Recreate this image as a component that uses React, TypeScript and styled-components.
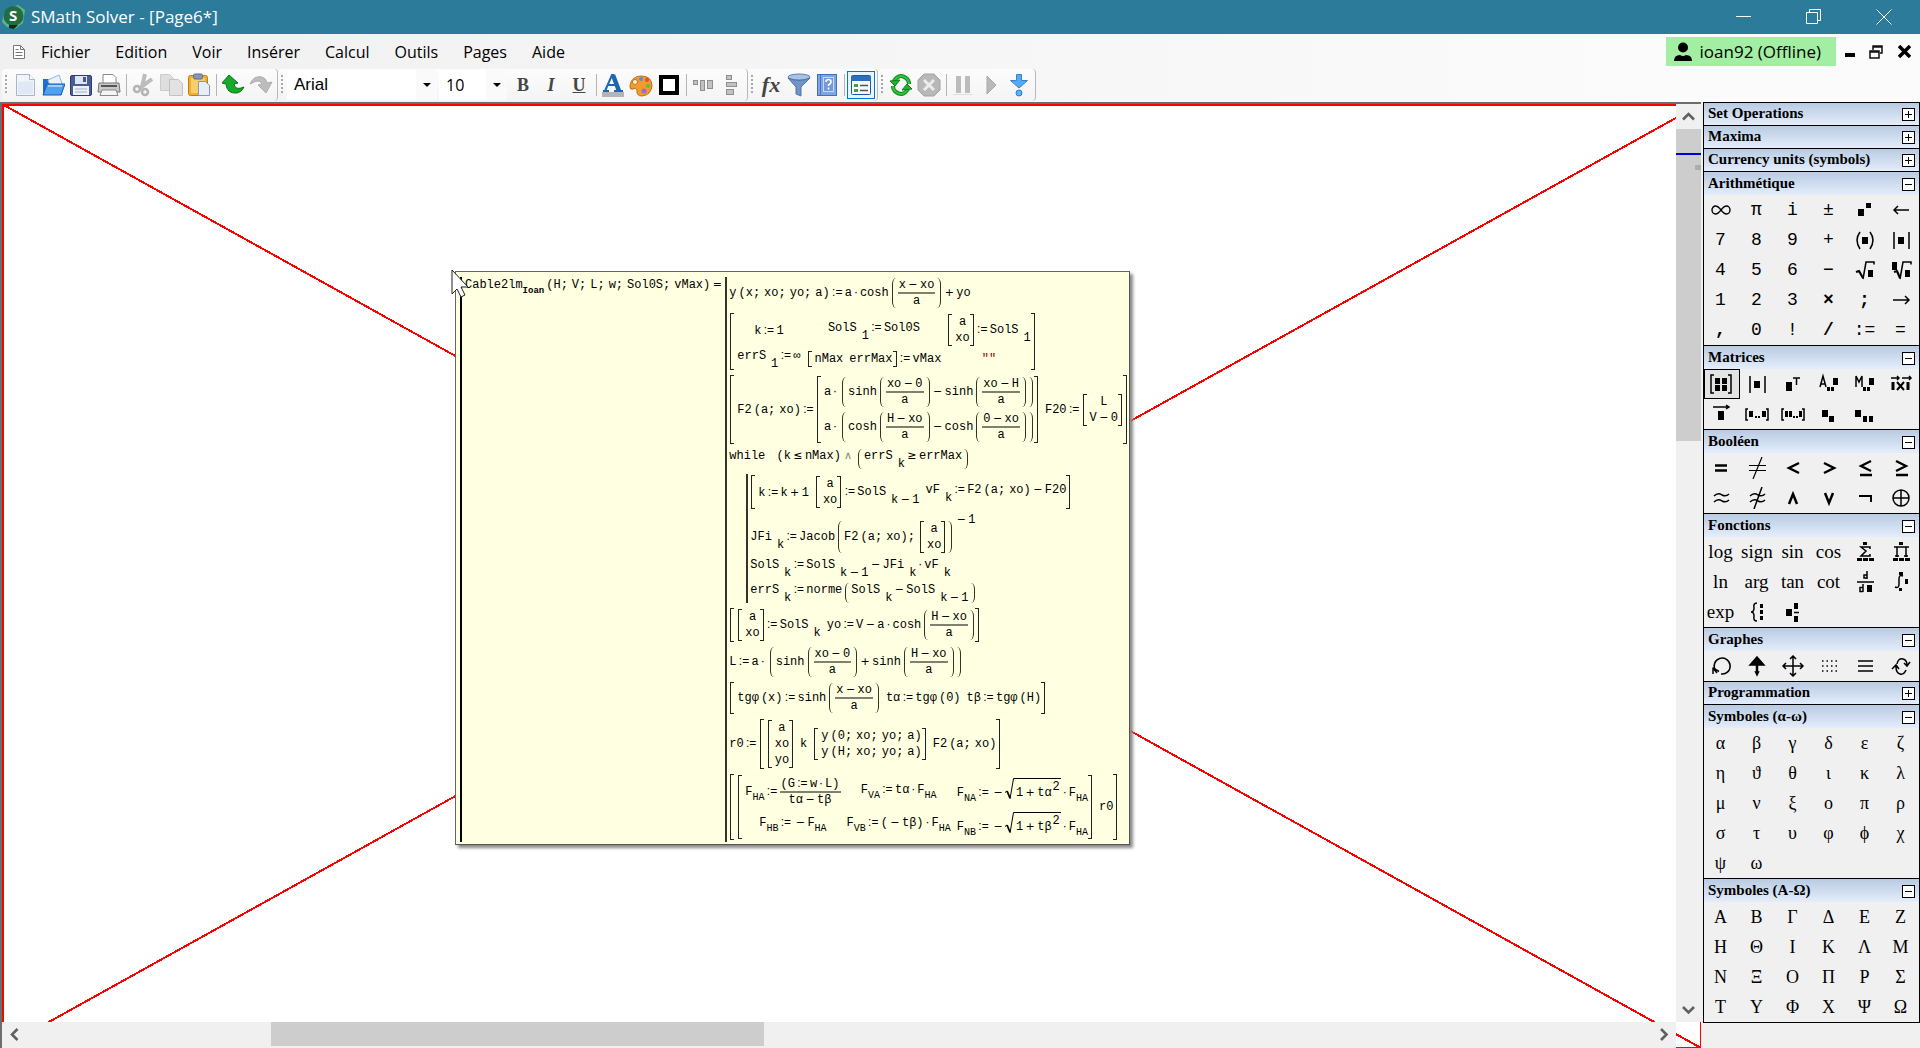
import React from "react";
import styled, { createGlobalStyle } from "styled-components";

const mono = `"Liberation Mono", "DejaVu Sans Mono", monospace`;
const ui = `"Open Sans", "Noto Sans", sans-serif`;
const serif = `"Liberation Serif", serif`;

const Global = createGlobalStyle`
  *, *::before, *::after { box-sizing: border-box; }
  html, body, #root { height: 100%; margin: 0; }
  body { background: #f0f0f0; font-family: ${ui}; color: #000; overflow: hidden; }
  button, input, select { font: inherit; color: inherit; margin: 0; padding: 0; border: 0; background: none; border-radius: 0; }
  svg { display: block; }
`;

/* ---------- window frame ---------- */

const Shell = styled.div`
  display: flex;
  flex-direction: column;
  height: 100vh;
`;
const TitleBar = styled.header`
  display: flex;
  align-items: center;
  height: 34px;
  flex: none;
  padding: 0 8px 0 2px;
  gap: 5px;
  background: #2c7b9a;
  color: #fff;
`;
const Title = styled.h1`
  flex: 1;
  margin: 0;
  font-size: 17px;
  line-height: 24px;
  font-weight: 400;
`;
const WindowButtons = styled.div`
  display: flex;
  gap: 14px;
`;
const WindowButton = styled.button`
  display: grid;
  place-items: center;
  width: 56px;
  height: 34px;
`;
const MenuBar = styled.nav`
  display: flex;
  align-items: center;
  height: 35px;
  flex: none;
  padding: 0 6px 0 11px;
  background: linear-gradient(90deg, #f0f0f0, #fbfbfb 90%);
`;
const Menus = styled.div`
  display: flex;
  flex: 1;
  gap: 25px;
  margin-left: 14px;
`;
const MenuItem = styled.button`
  font-size: 16px;
  line-height: 24px;
`;
const Account = styled.button`
  display: flex;
  align-items: center;
  gap: 8px;
  height: 29px;
  padding: 0 15px 0 8px;
  background: #a2eea2;
  font-size: 17px;
  white-space: nowrap;
`;
const ChildButtons = styled.div`
  display: flex;
  align-items: center;
  margin-left: 3px;
`;
const ChildButton = styled.button`
  display: grid;
  place-items: center;
  width: 29px;
  height: 24px;
  &:first-child { width: 22px; }
  &:last-child { width: 20px; margin-left: 4px; }
`;
const ToolRow = styled.div`
  display: flex;
  height: 33px;
  flex: none;
  padding-left: 2px;
  background: linear-gradient(90deg, #f0f0f0, #fbfbfb 90%);
`;
const ToolGroup = styled.div`
  display: flex;
  align-items: center;
  height: 32px;
  padding-right: 2px;
  border-right: 1px solid #b8b8b8;
  border-radius: 4px;
  background: linear-gradient(#fcfcfc, #f4f4f4);
`;
const Grip = styled.span`
  width: 2px;
  height: 20px;
  margin: 0 4px 0 3px;
  background: repeating-linear-gradient(#a8a8a8 0 2px, transparent 2px 4px);
`;
const Tool = styled.button<{ $active?: boolean }>`
  display: grid;
  place-items: center;
  width: 28px;
  height: 28px;
  border: 1px solid ${(p) => (p.$active ? "#0078d7" : "transparent")};
  background: ${(p) => (p.$active ? "#eaf4fc" : "transparent")};
`;
const ToolLetter = styled.span<{ $italic?: boolean; $under?: boolean; $big?: boolean }>`
  font: ${(p) => (p.$italic ? "italic" : "normal")} 700 ${(p) => (p.$big ? 22 : 18)}px/20px ${serif};
  color: #454545;
  text-decoration: ${(p) => (p.$under ? "underline" : "none")};
`;
const Divider = styled.span`
  width: 1px;
  height: 22px;
  margin: 0 2px 0 3px;
  background: #b4b4b4;
`;
const Combo = styled.div<{ $size: "font" | "points" }>`
  display: flex;
  align-items: center;
  width: ${(p) => (p.$size === "font" ? 150 : 68)}px;
  height: 30px;
  margin-right: 2px;
  padding-left: 7px;
  background: #fff;
`;
const ComboInput = styled.input<{ $arial?: boolean }>`
  flex: 1;
  min-width: 0;
  outline: none;
  font-family: ${(p) => (p.$arial ? `"Liberation Sans", sans-serif` : ui)};
  font-size: ${(p) => (p.$arial ? 17 : 16)}px;
  line-height: 24px;
`;
const ComboArrow = styled.button`
  display: grid;
  place-items: center;
  width: 21px;
  height: 30px;
  background: #fafafa;
`;

/* ---------- work area ---------- */

const Main = styled.main`
  display: grid;
  grid-template-columns: minmax(0, 1fr) 217px;
  column-gap: 2px;
  flex: 1;
  min-height: 0;
`;
const Workspace = styled.section`
  position: relative;
  display: grid;
  grid-template-columns: minmax(0, 1fr) 25px;
  grid-template-rows: minmax(0, 1fr) 26px;
  border: solid #6d6d6d;
  border-width: 2px 0 0 2px;
  background: #fff;
`;
const Cross = styled.svg`
  position: absolute;
  inset: 0;
  width: 100%;
  height: 100%;
`;
const VScroll = styled.div`
  position: relative;
  z-index: 1;
  grid-area: 1 / 2;
  display: flex;
  flex-direction: column;
  background: #f0f0f0;
`;
const HScroll = styled.div`
  position: relative;
  z-index: 1;
  grid-area: 2 / 1;
  display: flex;
  background: #f0f0f0;
`;
const ScrollButton = styled.button`
  display: grid;
  place-items: center;
  width: 25px;
  height: 25px;
`;
const VTrack = styled.div`
  flex: 1;
`;
const VThumb = styled.div`
  height: 36%;
  background: #cdcdcd;
`;
const HTrack = styled.div`
  flex: 1;
  height: 24px;
`;
const HThumb = styled.div`
  width: 30.4%;
  height: 24px;
  margin-left: 15%;
  background: #cdcdcd;
`;
const BlueMark = styled.span`
  position: absolute;
  top: 49px;
  left: 0;
  width: 25px;
  height: 2px;
  background: #0000d8;
`;
const GreyMark = styled.span`
  position: absolute;
  top: 61px;
  right: 0;
  width: 6px;
  height: 5px;
  background: #adadad;
`;
const Pointer = styled.svg`
  position: absolute;
  left: 449px;
  top: 165px;
`;

/* ---------- formula tooltip ---------- */

const Tip = styled.div`
  position: absolute;
  left: 453px;
  top: 167px;
  display: flex;
  padding: 5px 1px 2px 4px;
  border: 1px solid #63686c;
  border-color: #63686c #555 #555 #63686c;
  box-shadow: 3px 3px 3px #8a8a8a;
  background: #ffffe1;
  font: 12px/14px ${mono};
  white-space: nowrap;
`;
const Definition = styled.div`
  padding: 1px 1px 0 3px;
  border-left: 2px solid #000;
`;
const Block = styled.div<{ $inner?: boolean }>`
  display: flex;
  flex-direction: column;
  align-items: flex-start;
  gap: ${(p) => (p.$inner ? 4 : 5)}px;
  padding: ${(p) => (p.$inner ? "1px 0 0 2px" : "1px 0 2px 2px")};
  margin-left: ${(p) => (p.$inner ? 17 : 0)}px;
  border-left: 2px solid #333326;
`;
const Sep = styled.span`
  margin-right: 4px;
`;
const ArgOpen = styled.span`
  margin-left: 2px;
`;
const Operator = styled.span<{ $dim?: boolean }>`
  display: inline-block;
  width: 14px;
  text-align: center;
  font-family: "DejaVu Sans", sans-serif;
  font-size: 11px;
  color: ${(p) => (p.$dim ? "#888878" : "inherit")};
`;
const AssignOp = styled.span`
  display: inline-block;
  width: 15px;
  text-align: center;
  font-family: "Liberation Sans", sans-serif;
  font-size: 12px;
`;
const DotOp = styled.span`
  display: inline-block;
  width: 8px;
  text-align: center;
  font-family: "Liberation Sans", sans-serif;
`;
const FracBox = styled.span`
  display: inline-flex;
  flex-direction: column;
  align-items: center;
  vertical-align: middle;
`;
const FracTop = styled.span`
  padding: 0 1px;
  border-bottom: 2px solid #808072;
`;
const Group = styled.span`
  display: inline-flex;
  padding-left: 2px;
`;
const ParenSide = styled.span<{ $right?: boolean }>`
  width: 4px;
  margin: 0 1px;
  border-left: ${(p) => (p.$right ? 0 : 1)}px solid #333326;
  border-right: ${(p) => (p.$right ? 1 : 0)}px solid #333326;
  border-radius: ${(p) => (p.$right ? "0 4px 4px 0 / 0 6px 6px 0" : "4px 0 0 4px / 6px 0 0 6px")};
`;
const GroupBody = styled.span`
  align-self: baseline;
  padding: 0 1px;
`;
const MatrixBox = styled.span<{ $cols: number; $loose?: boolean }>`
  position: relative;
  display: inline-grid;
  grid-template-columns: repeat(${(p) => p.$cols}, auto);
  justify-items: center;
  align-items: center;
  gap: ${(p) => (p.$loose ? 5 : 2)}px 6px;
  padding: 1px 5px 1px 8px;
  vertical-align: middle;
  &::before, &::after {
    content: "";
    position: absolute;
    top: 0;
    bottom: 0;
    width: 4px;
    border: 1px solid #222;
  }
  &::before { left: 1px; border-right: 0; }
  &::after { right: 1px; border-left: 0; }
`;
const Cell = styled.span`
  display: block;
`;
const Index = styled.span`
  display: inline-block;
  margin-left: 5px;
  line-height: 10px;
  vertical-align: -8px;
`;
const Label = styled.span`
  font-size: 10px;
  line-height: 10px;
  vertical-align: -5px;
`;
const BoldLabel = styled.span`
  font-size: 9px;
  font-weight: 700;
  vertical-align: -5px;
`;
const Power = styled.span<{ $high?: boolean }>`
  margin-left: 1px;
  vertical-align: ${(p) => (p.$high ? 17 : 6)}px;
`;
const Text = styled.span`
  color: #900;
`;
const RootBox = styled.span`
  display: inline-flex;
`;
const RootBody = styled.span`
  align-self: baseline;
  padding: 1px 1px 2px 2px;
  border-top: 1px solid #000;
`;

const Set = () => <AssignOp>:=</AssignOp>;
const Minus = () => <Operator>−</Operator>;
const Plus = () => <Operator>+</Operator>;
const Dot = () => <DotOp>·</DotOp>;

const Call = ({ name, args }: { name: React.ReactNode; args: string[] }) => (
  <>
    {name}
    <ArgOpen>(</ArgOpen>
    {args.map((a, i) => (
      <React.Fragment key={i}>
        {a}
        {i < args.length - 1 && <Sep>;</Sep>}
      </React.Fragment>
    ))}
    )
  </>
);
const Paren = ({ children }: { children: React.ReactNode }) => (
  <Group>
    <ParenSide />
    <GroupBody>{children}</GroupBody>
    <ParenSide $right />
  </Group>
);
const Frac = ({ top, bottom }: { top: React.ReactNode; bottom: React.ReactNode }) => (
  <FracBox>
    <FracTop>{top}</FracTop>
    <span>{bottom}</span>
  </FracBox>
);
const Matrix = ({ cols = 1, loose, cells }: { cols?: number; loose?: boolean; cells: React.ReactNode[] }) => (
  <MatrixBox $cols={cols} $loose={loose}>
    {cells.map((c, i) => (
      <Cell key={i}>{c}</Cell>
    ))}
  </MatrixBox>
);
const Root = ({ children }: { children: React.ReactNode }) => (
  <RootBox>
    <svg width="9" height="22" viewBox="0 0 9 22" fill="none" stroke="#000">
      <path d="M0 14.5 2 13" />
      <path d="M2 13 5 20" strokeWidth="1.8" />
      <path d="M5 21 8.5 .5H9" />
    </svg>
    <RootBody>{children}</RootBody>
  </RootBox>
);
const F = ({ s }: { s: string }) => (
  <>
    F<Label>{s}</Label>
  </>
);
const diff = (a: string, b: string) => (
  <>
    {a}
    <Minus />
    {b}
  </>
);
const pair = <Matrix cells={["a", "xo"]} />;

const Formula = () => (
  <Tip>
    <Definition>
      <Call name={<>Cable2lm<BoldLabel>Ioan</BoldLabel></>} args={["H", "V", "L", "w", "Sol0S", "vMax"]} />
      <Operator>=</Operator>
    </Definition>
    <Block>
      <div>
        <Call name="y" args={["x", "xo", "yo", "a"]} />
        <Set />a<Dot />cosh
        <Paren>
          <Frac top={diff("x", "xo")} bottom="a" />
        </Paren>
        <Plus />yo
      </div>
      <Matrix
        cols={3}
        cells={[
          <>k<Set />1</>,
          <>SolS<Index>1</Index><Set />Sol0S</>,
          <>{pair}<Set />SolS<Index>1</Index></>,
          <>errS<Index>1</Index><Set />∞</>,
          <><Matrix cols={2} cells={["nMax", "errMax"]} /><Set />vMax</>,
          <Text>""</Text>,
        ]}
      />
      <Matrix
        cols={2}
        cells={[
          <>
            <Call name="F2" args={["a", "xo"]} />
            <Set />
            <Matrix
              loose
              cells={[
                <>a<Dot /><Paren>sinh<Paren><Frac top={diff("xo", "0")} bottom="a" /></Paren><Minus />sinh<Paren><Frac top={diff("xo", "H")} bottom="a" /></Paren></Paren></>,
                <>a<Dot /><Paren>cosh<Paren><Frac top={diff("H", "xo")} bottom="a" /></Paren><Minus />cosh<Paren><Frac top={diff("0", "xo")} bottom="a" /></Paren></Paren></>,
              ]}
            />
          </>,
          <>F20<Set /><Matrix cells={["L", diff("V", "0")]} /></>,
        ]}
      />
      <div>
        <Sep>while</Sep> (k<Operator>≤</Operator>nMax)<Operator $dim>∧</Operator>
        <Paren>errS<Index>k</Index><Operator>≥</Operator>errMax</Paren>
      </div>
      <Block $inner>
        <Matrix
          cols={3}
          cells={[
            <>k<Set />k<Plus />1</>,
            <>{pair}<Set />SolS<Index>{diff("k", "1")}</Index></>,
            <>vF<Index>k</Index><Set /><Call name="F2" args={["a", "xo"]} /><Minus />F20</>,
          ]}
        />
        <div>
          JFi<Index>k</Index><Set />Jacob
          <Paren><Call name="F2" args={["a", "xo"]} /><Sep>;</Sep>{pair}</Paren>
          <Power $high><Minus />1</Power>
        </div>
        <div>SolS<Index>k</Index><Set />SolS<Index>{diff("k", "1")}</Index><Minus />JFi<Index>k</Index><Dot />vF<Index>k</Index></div>
        <div>
          errS<Index>k</Index><Set />norme
          <Paren>SolS<Index>k</Index><Minus />SolS<Index>{diff("k", "1")}</Index></Paren>
        </div>
      </Block>
      <Matrix
        cols={2}
        cells={[
          <>{pair}<Set />SolS<Index>k</Index></>,
          <>yo<Set />V<Minus />a<Dot />cosh<Paren><Frac top={diff("H", "xo")} bottom="a" /></Paren></>,
        ]}
      />
      <div>
        L<Set />a<Dot />
        <Paren>
          sinh<Paren><Frac top={diff("xo", "0")} bottom="a" /></Paren><Plus />sinh<Paren><Frac top={diff("H", "xo")} bottom="a" /></Paren>
        </Paren>
      </div>
      <Matrix
        cols={3}
        cells={[
          <><Call name="tgφ" args={["x"]} /><Set />sinh<Paren><Frac top={diff("x", "xo")} bottom="a" /></Paren></>,
          <>tα<Set /><Call name="tgφ" args={["0"]} /></>,
          <>tβ<Set /><Call name="tgφ" args={["H"]} /></>,
        ]}
      />
      <div>
        r0<Set />
        <Matrix
          cols={4}
          cells={[
            <Matrix cells={["a", "xo", "yo"]} />,
            "k",
            <Matrix cells={[<Call name="y" args={["0", "xo", "yo", "a"]} />, <Call name="y" args={["H", "xo", "yo", "a"]} />]} />,
            <Call name="F2" args={["a", "xo"]} />,
          ]}
        />
      </div>
      <Matrix
        cols={2}
        cells={[
          <Matrix
            cols={3}
            loose
            cells={[
              <><F s="HA" /><Set /><Frac top={<>(G<Set />w<Dot />L)</>} bottom={diff("tα", "tβ")} /></>,
              <><F s="VA" /><Set />tα<Dot /><F s="HA" /></>,
              <><F s="NA" /><Set /><Minus /><Root>1<Plus />tα<Power>2</Power></Root><Dot /><F s="HA" /></>,
              <><F s="HB" /><Set /><Minus /><F s="HA" /></>,
              <><F s="VB" /><Set />(<Minus />tβ)<Dot /><F s="HA" /></>,
              <><F s="NB" /><Set /><Minus /><Root>1<Plus />tβ<Power>2</Power></Root><Dot /><F s="HA" /></>,
            ]}
          />,
          "r0",
        ]}
      />
    </Block>
  </Tip>
);

/* ---------- side palettes ---------- */

const Side = styled.aside`
  align-self: start;
  border: solid #000;
  border-width: 0 1px 1px 1px;
`;
const PaletteHead = styled.h2<{ $open: boolean }>`
  display: flex;
  align-items: center;
  justify-content: space-between;
  height: ${(p) => (p.$open ? 24 : 23)}px;
  margin: 0;
  padding: 0 4px 2px;
  border-top: 1px solid #000;
  background: linear-gradient(#b9cbe2, #e4edfb);
  font: 700 15px/20px ${serif};
`;
const Toggle = styled.button`
  display: grid;
  place-items: center;
  width: 13px;
  height: 13px;
  margin-top: 3px;
  border: 1px solid #000;
  background: #fff;
`;
const Keys = styled.div`
  display: grid;
  grid-template-columns: repeat(6, 36px);
  grid-auto-rows: 30px;
  margin-right: -1px;
`;
type Face = "mono" | "words" | "greek";
const faces: Record<Face, string> = {
  mono: `18px/24px ${mono}`,
  words: `19px/24px ${serif}`,
  greek: `18px/24px ${serif}`,
};
const Key = styled.button<{ $face?: Face; $bold?: boolean; $on?: boolean }>`
  display: grid;
  place-items: center;
  padding-right: 3px;
  white-space: nowrap;
  border: 1px solid ${(p) => (p.$on ? "#000" : "transparent")};
  background: ${(p) => (p.$on ? "#e3e3e3" : "transparent")};
  font: ${(p) => (p.$bold ? 700 : 400)} ${(p) => faces[p.$face ?? "mono"]};
`;

const S = ({ children, w = 24 }: { children: React.ReactNode; w?: number }) => (
  <svg width={w} height="22" viewBox={`0 0 ${w} 22`} fill="none" stroke="#000" strokeWidth="1.5">
    {children}
  </svg>
);
const Sq = ({ x, y, w = 5, h = 6 }: { x: number; y: number; w?: number; h?: number }) => (
  <rect x={x} y={y} width={w} height={h} fill="#000" stroke="none" />
);

const G: Record<string, React.ReactNode> = {
  inf: <S><path d="M12 11q-3-4-5.500-4a3.500 4 0 0 0 0 8Q9 15 12 11t5.500-4a3.500 4 0 0 1 0 8Q15 15 12 11z" strokeWidth="1.400" /></S>,
  pow: <S><Sq x={5} y={10} w={6} h={7} /><Sq x={13} y={4} w={5} h={5} /></S>,
  left: <S><path d="M5 11h15M9 7l-4 4 4 4" /></S>,
  right: <S><path d="M4 11h16M16 7l4 4-4 4" /></S>,
  paren: <S><path d="M7 3q-6 8 0 17M17 3q6 8 0 17" /><Sq x={9} y={8} w={6} h={7} /></S>,
  bars: <S><path d="M5 3v17M20 3v17" /><Sq x={9} y={8} w={6} h={7} /></S>,
  sqrt: <S><path d="m3 13 3-1 4 7" strokeWidth="2.200" /><path d="M10 20 13 3h8v2.500" /><Sq x={15} y={11} w={5} h={7} /></S>,
  nroot: <S><path d="m5 13 3-1 3 7" strokeWidth="2.200" /><path d="M11 20 14 3h8v2.500" /><Sq x={3} y={3} w={5} h={8} /><Sq x={16} y={11} w={5} h={7} /></S>,
  matrix: <S><path d="M5 2H2v18h3M19 2h3v18h-3" /><Sq x={6} y={5} /><Sq x={13} y={5} /><Sq x={6} y={12} /><Sq x={13} y={12} /></S>,
  transpose: <S><Sq x={5} y={9} w={6} h={9} /><path d="M12 5h7M15.500 5v7" /></S>,
  minorA: <S><path d="m3 14 3-11 3 11M4 11h4" /><Sq x={16} y={5} w={5} h={7} /><Sq x={10} y={14} w={3} h={4} /><Sq x={14} y={14} w={3} h={4} /></S>,
  minorM: <S><path d="M3 14V3l3 6 3-6v11" /><Sq x={16} y={5} w={5} h={7} /><Sq x={10} y={14} w={3} h={4} /><Sq x={14} y={14} w={3} h={4} /></S>,
  cross: <S><path d="M2 5h8M8 3l2 2-2 2M13 5h9M20 3l2 2-2 2" /><path d="M4 9v8M19 9v8" strokeWidth="3" /><path d="m8 9 7 8M15 9l-7 8" strokeWidth="2" /></S>,
  vec: <S><path d="M4 4h16M17 2l3 2-3 2" /><Sq x={9} y={8} w={6} h={9} /></S>,
  range1: <S><path d="M3 6H1v11h2M21 6h2v11h-2" /><Sq x={4} y={8} w={4} /><Sq x={17} y={8} w={4} /><Sq x={10} y={13} w={2} h={2} /><Sq x={13} y={13} w={2} h={2} /></S>,
  range2: <S><path d="M3 6H1v11h2M21 6h2v11h-2" /><Sq x={4} y={8} w={3} /><Sq x={8} y={8} w={3} /><Sq x={18} y={8} w={3} /><Sq x={12} y={13} w={2} h={2} /><Sq x={15} y={13} w={2} h={2} /></S>,
  sub1: <S><Sq x={5} y={7} w={6} h={7} /><Sq x={12} y={13} w={5} h={6} /></S>,
  sub2: <S><Sq x={2} y={7} w={6} h={7} /><Sq x={10} y={13} w={4} h={6} /><Sq x={16} y={13} w={4} h={6} /></S>,
  eq: <S><path d="M6 8.500h12M6 13.500h12" strokeWidth="2.500" /></S>,
  ne: <S><path d="M4 8.500h17M4 13.500h17M8 22 17 0" strokeWidth="1.200" /></S>,
  lt: <S><path d="M18 6 8 11l10 5" strokeWidth="2.500" /></S>,
  gt: <S><path d="m7 6 10 5-10 5" strokeWidth="2.500" /></S>,
  le: <S><path d="M18 4 8 9l10 5M7 18h12" strokeWidth="2.300" /></S>,
  ge: <S><path d="m7 4 10 5-10 5M7 18h12" strokeWidth="2.300" /></S>,
  approx: <S><path d="M5 9q4-4 8-1 4 2 7-1M5 15q4-4 8-1 4 2 7-1" /></S>,
  napprox: <S><path d="M5 9q4-4 8-1 4 2 7-1M5 15q4-4 8-1 4 2 7-1M9 22 17 0" /></S>,
  and: <S><path d="m8 17 4-10 4 10" strokeWidth="2.500" /></S>,
  or: <S><path d="m8 6 4 10 4-10" strokeWidth="2.500" /></S>,
  not: <S><path d="M6 9h12v6" strokeWidth="2" /></S>,
  xor: <S><circle cx="12" cy="11" r="8" /><path d="M12 3v16M4 11h16" /></S>,
  sum: <S><path d="M17 8V6H8l5 4-5 5h9v-2" /><Sq x={10} y={1} w={4} h={3} /><Sq x={4} y={17} w={5} h={3} /><Sq x={10} y={17} w={5} h={3} /><Sq x={16} y={17} w={5} h={3} /></S>,
  prod: <S><path d="M5 6h15M8 6v10M17 6v10M6 15h4M15 15h4" /><Sq x={10} y={1} w={4} h={3} /><Sq x={4} y={17} w={5} h={3} /><Sq x={10} y={17} w={5} h={3} /><Sq x={16} y={17} w={5} h={3} /></S>,
  deriv: <S><path d="M4 11h17M14 0v8M14 4h-3v3h3M10 13v8M10 16.500H7v4h3" /><Sq x={14} y={14} w={5} h={7} /></S>,
  integral: <S><path d="M14 5q-4-2-4 3v5q0 5-4 3" /><Sq x={10} y={1} w={4} h={3} /><Sq x={16} y={8} w={3} h={5} /><Sq x={10} y={17} w={3} h={3} /></S>,
  cases: <S><path d="M12 2q-4 0-3 5 0 4-3 4 3 0 3 4-1 5 3 5" /><Sq x={15} y={3} w={3} h={4} /><Sq x={15} y={9} w={3} h={4} /><Sq x={15} y={15} w={3} h={4} /></S>,
  branch: <S><Sq x={5} y={8} w={6} h={7} /><Sq x={13} y={2} w={4} h={6} /><Sq x={13} y={15} w={4} h={6} /><path d="M13 11.500h5" /></S>,
  rotate: <S><path d="M6.500 15.500A8 8 0 1 1 12 19" /><path d="M4 12.500v6.500M4 13l6 3.500M4 13l4 5" /></S>,
  scale: <S><path d="m12 2 7 8H5z" fill="#000" /><path d="M12 8v9" strokeWidth="2.500" /><path d="m10.500 17 1.500 3 1.500-3z" fill="#000" /></S>,
  move: <S><path d="M12 1v20M2 11h20M9 4l3-3 3 3M9 18l3 3 3-3M5 8l-3 3 3 3M19 8l3 3-3 3" /></S>,
  dots: <S><path d="M5 6h16M5 11h16M5 16h16" strokeDasharray="1.500 3" /></S>,
  lines: <S><path d="M5 6h15M5 11h15M5 16h15" /></S>,
  refresh: <S><path d="M8 9q1-6 6-5 4 1 4 6M15 8l3 3 3-4M17 15q-2 5-6 4-4-1-4-7M3 14l4-4 3 4" /></S>,
};

type Palette = { title: string; keys?: (string | { g: string })[]; face?: Face };
const g = (name: string) => ({ g: name });
const palettes: Palette[] = [
  { title: "Set Operations" },
  { title: "Maxima" },
  { title: "Currency units (symbols)" },
  {
    title: "Arithmétique",
    keys: [g("inf"), "π", "i", "±", g("pow"), g("left"), "7", "8", "9", "+", g("paren"), g("bars"), "4", "5", "6", "−", g("sqrt"), g("nroot"), "1", "2", "3", "×", ";", g("right"), ",", "0", "!", "/", ":=", "="],
  },
  {
    title: "Matrices",
    keys: ["matrix", "bars", "transpose", "minorA", "minorM", "cross", "vec", "range1", "range2", "sub1", "sub2"].map(g),
  },
  { title: "Booléen", keys: ["eq", "ne", "lt", "gt", "le", "ge", "approx", "napprox", "and", "or", "not", "xor"].map(g) },
  {
    title: "Fonctions",
    face: "words",
    keys: ["log", "sign", "sin", "cos", g("sum"), g("prod"), "ln", "arg", "tan", "cot", g("deriv"), g("integral"), "exp", g("cases"), g("branch")],
  },
  { title: "Graphes", keys: ["rotate", "scale", "move", "dots", "lines", "refresh"].map(g) },
  { title: "Programmation" },
  { title: "Symboles (α-ω)", face: "greek", keys: [..."αβγδεζηϑθικλμνξοπρστυφϕχψω"] },
  { title: "Symboles (Α-Ω)", face: "greek", keys: [..."ΑΒΓΔΕΖΗΘΙΚΛΜΝΞΟΠΡΣΤΥΦΧΨΩ"] },
];
const boldKeys = ["×", ";", ",", "/"];

const Palettes = () => (
  <Side>
    {palettes.map((p) => (
      <section key={p.title}>
        <PaletteHead $open={!!p.keys}>
          {p.title}
          <Toggle aria-label={p.title}>
            <svg width="9" height="9" viewBox="0 0 9 9" stroke="#000">
              <path d={p.keys ? "M1 4.500h7" : "M1 4.500h7M4.500 1v7"} />
            </svg>
          </Toggle>
        </PaletteHead>
        {p.keys && (
          <Keys>
            {p.keys.map((k, i) =>
              typeof k === "string" ? (
                <Key key={i} $face={p.face} $bold={boldKeys.includes(k)}>
                  {k}
                </Key>
              ) : (
                <Key key={i} aria-label={k.g} $on={k.g === "matrix"}>
                  {G[k.g]}
                </Key>
              )
            )}
          </Keys>
        )}
      </section>
    ))}
  </Side>
);

/* ---------- toolbar icons ---------- */

const I = ({ children }: { children: React.ReactNode }) => (
  <svg width="24" height="24" viewBox="0 0 24 24" fill="none">
    {children}
  </svg>
);
const icons = {
  new: <I><path d="M3.500 1.500h13l5 5v16h-18z" fill="#f1f5fb" stroke="#a9b4c4" /><path d="M16.500 1.500v5h5" fill="#fff" stroke="#a9b4c4" /><path d="M5 21V9l15-1v13z" fill="#d9e3f2" opacity=".7" /></I>,
  open: <I><path d="M2 22V6h6l2 2h11v14z" fill="#1d6fd0" /><path d="M7 7l11-5 4 11-12 3z" fill="#e8f2fc" stroke="#8fb6e0" /><path d="M2 22 6 11h18l-4 11z" fill="#4fa0ee" stroke="#1559b5" /><path d="M7 13h14" stroke="#9fd0fa" strokeWidth="2" /></I>,
  save: <I><rect x="1.500" y="2.500" width="21" height="20" rx="1.500" fill="#4a5c98" stroke="#2f3d6d" /><path d="M6 3h12v8H6z" fill="#dfe6f2" /><path d="M14 4h3v5h-3z" fill="#48578a" /><path d="M4 13h16v9H4z" fill="#eef2f8" /><path d="M6 16h12M6 19h12" stroke="#9fb0cc" /></I>,
  print: <I><path d="M6 1.500h10l3 3V11H6z" fill="#fff" stroke="#888" /><path d="M2 10h20l1 9H1z" fill="#c9c9c9" stroke="#777" /><path d="M4 13h16" stroke="#555" strokeWidth="2" /><path d="M5 17h14l2 5.500H3z" fill="#f6f6f6" stroke="#8a8a8a" /></I>,
  cut: <I><path d="M14 1 11 14M21 6 9 15" stroke="#bcbcbc" strokeWidth="4" /><circle cx="6" cy="16" r="3" stroke="#b4b4b4" strokeWidth="2.500" /><circle cx="14" cy="19" r="3" stroke="#b4b4b4" strokeWidth="2.500" /></I>,
  copy: <I><path d="M1.500 1.500h9l4 4v12h-13z" fill="#dedede" stroke="#cbcbcb" /><path d="M10.500 6.500h9l4 4v12h-13z" fill="#e2e2e2" stroke="#c2c2c2" /></I>,
  paste: <I><rect x="1.500" y="2.500" width="19" height="20" rx="2" fill="#f0b02e" stroke="#c07c0c" /><path d="M4 5h14v15H4z" fill="#f7cf6a" /><rect x="6.500" y="1" width="9" height="5" rx="1.500" fill="#8a95b5" stroke="#5f6a90" /><path d="M11.500 8.500h7l4 4v10h-11z" fill="#e7edfa" stroke="#8796bd" /></I>,
  undo: <I><path d="M8 2 1 10l4 1q1 10 11 9 5-1 7-6-9 4-10-3l4-1z" fill="#17a92b" stroke="#07760f" /></I>,
  redo: <I><path d="M1 11Q5 2 13 4q4 1 5 6l5-1-6 11-8-8 4-1q-2-6-12 0z" fill="#bdbdbd" stroke="#acacac" /></I>,
  color: <I><path d="M1 19h22v5H1z" fill="#b4b4b4" /><path d="M4 18 11 2h2" stroke="#1c66b4" strokeWidth="2" /><path d="m12 2 6 16" stroke="#1c66b4" strokeWidth="4.500" /><path d="M6 12h9M2 18h6M13 18h9" stroke="#1c66b4" strokeWidth="2" /></I>,
  palette: <I><path d="M12 3C5 3 1 8 1 14q0 3 3 2 3-2 4 1-1 6 5 6 9-1 10-10Q23 3 12 3z" fill="#f39a2c" stroke="#c06f14" /><circle cx="6" cy="9" r="2.500" fill="#fff3d8" stroke="#b87422" /><circle cx="12" cy="6" r="2" fill="#4b90e6" /><circle cx="18" cy="7" r="2" fill="#e04b3a" /><circle cx="19" cy="13" r="2" fill="#59c13e" /><circle cx="15" cy="18" r="2.500" fill="#a068dd" /></I>,
  border: <I><rect x="4" y="4" width="16" height="16" fill="#fff" stroke="#000" strokeWidth="4" /></I>,
  alignH: <I><g fill="#c2c2c2" stroke="#8f8f8f"><rect x="2.500" y="7.500" width="4" height="4" /><rect x="9.500" y="7.500" width="4" height="10" /><rect x="16.500" y="7.500" width="5" height="8" /></g></I>,
  alignV: <I><g fill="#c2c2c2" stroke="#8f8f8f"><rect x="7.500" y="2.500" width="5" height="4" /><rect x="7.500" y="9.500" width="10" height="4" /><rect x="7.500" y="16.500" width="7" height="5" /></g></I>,
  filter: <I><ellipse cx="12" cy="4" rx="11" ry="3" fill="#a9c1e2" stroke="#5b80b4" /><path d="M1 5q11 5 22 0L14 14v9l-5-2v-7z" fill="#6e94c8" stroke="#4e74aa" /></I>,
  help: <I><rect x="2.500" y="1.500" width="19" height="21" fill="#7fa5e3" stroke="#446fb8" /><path d="M5.500 2v20" stroke="#4a74bd" /><rect x="8.500" y="4.500" width="10" height="14" fill="#7199dc" stroke="#c7dbf8" /><path d="M11 9q0-2.500 2.500-2.500T16 9q0 1.500-2.500 3v1M13.500 14.500v2" stroke="#fff" strokeWidth="1.600" /></I>,
  options: <I><rect x="2.500" y="2.500" width="19" height="19" rx="1" fill="#f7fbff" stroke="#1b5aa6" /><path d="M2 3h20v5H2z" fill="#2a70c0" /><path d="M5 11h4v3H5zM5 16h4v3H5z" fill="#43a047" /><path d="M11 12.500h8M11 17.500h8" stroke="#555" strokeWidth="1.500" /></I>,
  refresh: <I><path d="M5 8Q10 0 17 5q3 2 3 6" stroke="#0f8a1c" strokeWidth="4" /><path d="M5 8Q10 0 17 5q3 2 3 6" stroke="#2fc43b" strokeWidth="2" /><path d="M1 8 11 7 6 13z" fill="#23b12f" stroke="#0d7d18" /><path d="M19 16q-5 8-12 3-3-2-3-6" stroke="#0f8a1c" strokeWidth="4" /><path d="M19 16q-5 8-12 3-3-2-3-6" stroke="#2fc43b" strokeWidth="2" /><path d="m23 16-10 1 5-6z" fill="#23b12f" stroke="#0d7d18" /></I>,
  stop: <I><path d="M7 1h10l6 6v10l-6 6H7l-6-6V7z" fill="#b8b8b8" stroke="#a2a2a2" /><path d="m7 7 10 10M17 7 7 17" stroke="#ececec" strokeWidth="3" /></I>,
  pause: <I><path d="M5 3h5v17H5zM14 3h5v17h-5z" fill="#bcbcbc" /><path d="M2 21.500h20" stroke="#dedede" /></I>,
  play: <I><path d="M8 3v18l9-9z" fill="#bababa" stroke="#a8a8a8" /></I>,
  step: <I><path d="M9.500 1.500h5v6h6L12 15 3.500 7.500h6z" fill="#58aaf0" stroke="#3682cc" /><circle cx="12" cy="20" r="3" fill="#58b4f4" stroke="#2a7cc8" /></I>,
};
const fileTools = [["new", "open", "save", "print"], ["cut", "copy", "paste"], ["undo", "redo"]] as const;

const Chevron = ({ d, label }: { d: string; label: string }) => (
  <ScrollButton aria-label={label}>
    <svg width="13" height="13" viewBox="0 0 13 13" fill="none" stroke="#606060" strokeWidth="2.600">
      <path d={d} />
    </svg>
  </ScrollButton>
);
const DropArrow = ({ label }: { label: string }) => (
  <ComboArrow aria-label={label}>
    <svg width="8" height="4"><path d="M0 0h8L4 4z" /></svg>
  </ComboArrow>
);

export default function App() {
  return (
    <Shell>
      <Global />
      <TitleBar>
        <svg width="24" height="26" viewBox="0 0 24 26">
          <path d="M7 4 16 1l7 5-2 13-8 6-8-2-5-5 2-9z" fill="#5fb487" />
          <circle cx="11.500" cy="12" r="10" fill="#1f6d40" />
          <path d="m7 21 9 0-4 4-5-1z" fill="#0c2d1a" />
          <text x="7" y="17" fill="#fff" fontFamily="Open Sans" fontSize="15" fontWeight="700">S</text>
        </svg>
        <Title>SMath Solver - [Page6*]</Title>
        <WindowButtons>
          <WindowButton aria-label="Réduire"><svg width="16" height="16" stroke="#fff"><path d="M0 7.500h15" /></svg></WindowButton>
          <WindowButton aria-label="Restaurer"><svg width="16" height="16" stroke="#fff" fill="none"><path d="M.500 3.500h11v11H.500zM3.500 3V.500h11v11H12" /></svg></WindowButton>
          <WindowButton aria-label="Fermer"><svg width="16" height="16" stroke="#fff"><path d="m.500.500 15 15M15.500.500l-15 15" /></svg></WindowButton>
        </WindowButtons>
      </TitleBar>
      <MenuBar>
        <svg width="16" height="16" viewBox="0 0 16 16" fill="#fff" stroke="#777">
          <path d="M2.500 1.500h7l4 4v9h-11zM9.500 1.500v4h4M4.500 5.500h3M4.500 8.500h7M4.500 11.500h7" />
        </svg>
        <Menus>
          {["Fichier", "Edition", "Voir", "Insérer", "Calcul", "Outils", "Pages", "Aide"].map((m) => (
            <MenuItem key={m}>{m}</MenuItem>
          ))}
        </Menus>
        <Account>
          <svg width="18" height="20" viewBox="0 0 18 20"><circle cx="9" cy="5.500" r="5" /><path d="M0 19q0-6 6-6 3 2 6 0 6 0 6 6z" /></svg>
          ioan92 (Offline)
        </Account>
        <ChildButtons>
          <ChildButton aria-label="Réduire la page"><svg width="10" height="12"><path d="M0 7h10v4H0z" /></svg></ChildButton>
          <ChildButton aria-label="Restaurer la page"><svg width="14" height="14" fill="none" stroke="#111" strokeWidth="1.500"><path d="M1 6h9v7H1zM1 7h9M4 5V1h9v7h-2M4 2h9" /></svg></ChildButton>
          <ChildButton aria-label="Fermer la page"><svg width="13" height="13" stroke="#000" strokeWidth="3.500"><path d="m1 1 11 11M12 1 1 12" /></svg></ChildButton>
        </ChildButtons>
      </MenuBar>
      <ToolRow>
        <ToolGroup>
          <Grip />
          {fileTools.map((group, i) => (
            <React.Fragment key={i}>
              {i > 0 && <Divider />}
              {group.map((t) => (
                <Tool key={t} aria-label={t}>{icons[t]}</Tool>
              ))}
            </React.Fragment>
          ))}
        </ToolGroup>
        <ToolGroup>
          <Grip />
          <Combo $size="font"><ComboInput $arial aria-label="Police" defaultValue="Arial" /><DropArrow label="Liste des polices" /></Combo>
          <Combo $size="points"><ComboInput aria-label="Taille" defaultValue="10" /><DropArrow label="Liste des tailles" /></Combo>
          <Tool><ToolLetter>B</ToolLetter></Tool>
          <Tool><ToolLetter $italic>I</ToolLetter></Tool>
          <Tool><ToolLetter $under>U</ToolLetter></Tool>
          <Divider />
          <Tool aria-label="color">{icons.color}</Tool>
          <Tool aria-label="palette">{icons.palette}</Tool>
          <Tool aria-label="border">{icons.border}</Tool>
          <Divider />
          <Tool aria-label="align horizontal">{icons.alignH}</Tool>
          <Tool aria-label="align vertical">{icons.alignV}</Tool>
        </ToolGroup>
        <ToolGroup>
          <Grip />
          <Tool><ToolLetter $italic $big>fx</ToolLetter></Tool>
          <Tool aria-label="filter">{icons.filter}</Tool>
          <Tool aria-label="help">{icons.help}</Tool>
          <Divider />
          <Tool $active aria-label="options">{icons.options}</Tool>
        </ToolGroup>
        <ToolGroup>
          <Grip />
          <Tool aria-label="refresh">{icons.refresh}</Tool>
          <Tool aria-label="stop">{icons.stop}</Tool>
          <Divider />
          <Tool aria-label="pause">{icons.pause}</Tool>
          <Tool aria-label="play">{icons.play}</Tool>
          <Tool aria-label="step">{icons.step}</Tool>
        </ToolGroup>
      </ToolRow>
      <Main>
        <Workspace>
          <Cross stroke="#f00" strokeWidth="2" fill="none" shapeRendering="crispEdges">
            <line x1="0" y1="1" x2="100%" y2="1" />
            <line x1="1" y1="0" x2="1" y2="100%" />
            <line x1="0" y1="100%" x2="100%" y2="100%" />
            <line x1="100%" y1="0" x2="100%" y2="100%" />
            <line x1="0" y1="0" x2="100%" y2="100%" />
            <line x1="100%" y1="0" x2="0" y2="100%" />
          </Cross>
          <VScroll>
            <Chevron label="Haut" d="M1 9.500 6.500 4 12 9.500" />
            <VTrack><VThumb /></VTrack>
            <Chevron label="Bas" d="M1 4 6.500 9.500 12 4" />
            <BlueMark />
            <GreyMark />
          </VScroll>
          <HScroll>
            <Chevron label="Gauche" d="M9.500 1 4 6.500 9.500 12" />
            <HTrack><HThumb /></HTrack>
            <Chevron label="Droite" d="M4 1 9.500 6.500 4 12" />
          </HScroll>
          <Formula />
          <Pointer width="18" height="30" viewBox="0 0 18 30">
            <path d="M1 1v24l5-5 4 8 4-2-4-8h7z" fill="#fff" stroke="#222" />
          </Pointer>
        </Workspace>
        <Palettes />
      </Main>
    </Shell>
  );
}
